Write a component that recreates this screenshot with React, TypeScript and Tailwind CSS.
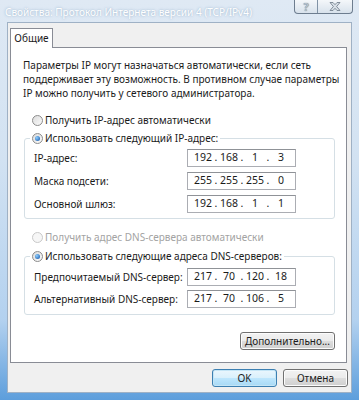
import { Fragment } from "react";

function Radio({ checked, disabled }: { checked?: boolean; disabled?: boolean }) {
    return (
        <span
            className={
                disabled
                    ? "flex h-[11px] w-[11px] shrink-0 items-center justify-center rounded-full border border-[#c9c9c9] bg-[#f6f6f6]"
                    : "flex h-[11px] w-[11px] shrink-0 items-center justify-center rounded-full border border-[#8c8c8c] bg-gradient-to-br from-[#dcdcdc] to-[#fbfbfb]"
            }
        >
            {checked && (
                <span className="h-[5px] w-[5px] rounded-full bg-[radial-gradient(circle_at_35%_35%,#8fd0ff,#0f4ea3)]" />
            )}
        </span>
    );
}

function IpBox({ parts }: { parts: string[] }) {
    return (
        <div className="flex h-[18px] w-[109px] items-center border border-[#abadb3] border-t-[#8f9297] bg-white pl-[4px] text-[10.5px] text-[#1b1b1b]">
            {parts.map((p, i) => (
                <Fragment key={i}>
                    <span className="w-[22px] text-center">{p}</span>
                    {i < 3 && <span className="w-[4px] text-center">.</span>}
                </Fragment>
            ))}
        </div>
    );
}

function Row({ label, parts }: { label: string; parts: string[] }) {
    return (
        <div className="grid h-[18px] grid-cols-[162px_109px] items-center">
            <span className="pl-[9px]">{label}</span>
            <IpBox parts={parts} />
        </div>
    );
}

function Legend({ text }: { text: string }) {
    return (
        <div className="-mt-[8px] ml-[5px] flex h-[14px] w-fit items-center gap-[2px] bg-white px-[2px]">
            <Radio checked />
            <span>{text}</span>
        </div>
    );
}

function WinButton({ label, primary }: { label: string; primary?: boolean }) {
    return (
        <button
            className={
                primary
                    ? "flex h-[18px] w-[65px] items-center justify-center rounded-[3px] border border-[#3c7fb1] bg-[linear-gradient(#eaf6fd_0%,#d9f0fc_50%,#bee6fd_51%,#a7d9f5_100%)] shadow-[inset_0_0_0_1px_#c4e5f6] text-[#1b1b1b]"
                    : "flex h-[18px] w-[65px] items-center justify-center rounded-[3px] border border-[#707070] bg-[linear-gradient(#f2f2f2_0%,#ebebeb_50%,#dddddd_51%,#cfcfcf_100%)] shadow-[inset_0_0_0_1px_#fcfcfc] text-[#1b1b1b]"
            }
        >
            {label}
        </button>
    );
}

export default function App() {
    return (
        <div className="relative h-[400px] w-[359px] overflow-hidden bg-[linear-gradient(#dfe9f4_0%,#d2e2f2_40%,#b3d1ef_80%,#5d9edc_100%)] font-['Noto_Sans',sans-serif] text-[10px] text-[#1b1b1b]">
            {/* title bar */}
            <div className="flex h-[22px] items-start justify-between">
                <span className="mt-[5px] whitespace-nowrap pl-[5px] text-[10px] leading-[14px] text-white [text-shadow:0_0_3px_#9db6cf,0_0_1px_#b8cadc]">
                    Свойства: Протокол Интернета версии 4 (TCP/IPv4)
                </span>
                <div className="mr-[6px] flex h-[14px] shrink-0 overflow-hidden rounded-b-[4px] border border-t-0 border-[#6d7d8f] bg-[linear-gradient(#f4f7fa,#d8e2ec)]">
                    <span className="flex w-[23px] items-center justify-center border-r border-[#8193a6] text-[11px] font-bold leading-none text-[#b7c2cd] [text-shadow:0_0_1px_#4b5a6a]">
                        ?
                    </span>
                    <span className="flex w-[34px] items-center justify-center">
                        <svg width="12" height="9" viewBox="0 0 12 9">
                            <path d="M1 0.5h3l2 2.2 2-2.2h3L7.6 4.5 11 8.5H8L6 6.3 4 8.5H1l3.4-4z" fill="#d9e0e7" stroke="#6b7886" strokeWidth="0.8" />
                        </svg>
                    </span>
                </div>
            </div>

            {/* client area */}
            <div className="mx-[7px] flex h-[371px] flex-col border border-[#9fb1c5] bg-[#f0f0f0]">
                <div className="relative z-10 -mb-px ml-[2px] mt-[5px] flex h-[20px] w-[43px] items-center justify-center border border-b-0 border-[#898c95] bg-white">
                    Общие
                </div>
                <div className="ml-[2px] flex h-[316px] w-[337px] flex-col border border-[#898c95] bg-white">
                    <p className="ml-[12px] mt-[10px] leading-[14px]">
                        Параметры IP могут назначаться автоматически, если сеть
                        <br />
                        поддерживает эту возможность. В противном случае параметры
                        <br />
                        IP можно получить у сетевого администратора.
                    </p>

                    <div className="ml-[21px] mt-[13px] flex h-[14px] items-center gap-[2px]">
                        <Radio />
                        <span>Получить IP-адрес автоматически</span>
                    </div>

                    <div className="ml-[13px] mt-[11px] flex w-[311px] flex-col rounded-[3px] border border-[#d5dfe5] pb-[5px]">
                        <Legend text="Использовать следующий IP-адрес:" />
                        <div className="mt-[4px] flex flex-col gap-[5px]">
                            <Row label="IP-адрес:" parts={["192", "168", "1", "3"]} />
                            <Row label="Маска подсети:" parts={["255", "255", "255", "0"]} />
                            <Row label="Основной шлюз:" parts={["192", "168", "1", "1"]} />
                        </div>
                    </div>

                    <div className="ml-[21px] mt-[11px] flex h-[14px] items-center gap-[2px] text-[#a3a3a3]">
                        <Radio disabled />
                        <span>Получить адрес DNS-сервера автоматически</span>
                    </div>

                    <div className="ml-[13px] mt-[12px] flex w-[311px] flex-col rounded-[3px] border border-[#d5dfe5] pb-[6px]">
                        <Legend text="Использовать следующие адреса DNS-серверов:" />
                        <div className="mt-[5px] flex flex-col gap-[4px]">
                            <Row label="Предпочитаемый DNS-сервер:" parts={["217", "70", "120", "18"]} />
                            <Row label="Альтернативный DNS-сервер:" parts={["217", "70", "106", "5"]} />
                        </div>
                    </div>

                    <div className="mr-[11px] mt-[17px] flex justify-end">
                        <button className="flex h-[18px] w-[95px] items-center justify-center rounded-[3px] border border-[#707070] bg-[linear-gradient(#f2f2f2_0%,#ebebeb_50%,#dddddd_51%,#cfcfcf_100%)] shadow-[inset_0_0_0_1px_#fcfcfc]">
                            Дополнительно...
                        </button>
                    </div>
                </div>

                <div className="mt-[6px] flex justify-end gap-[6px] pr-[3px]">
                    <WinButton label="OK" primary />
                    <WinButton label="Отмена" />
                </div>
            </div>
        </div>
    );
}
